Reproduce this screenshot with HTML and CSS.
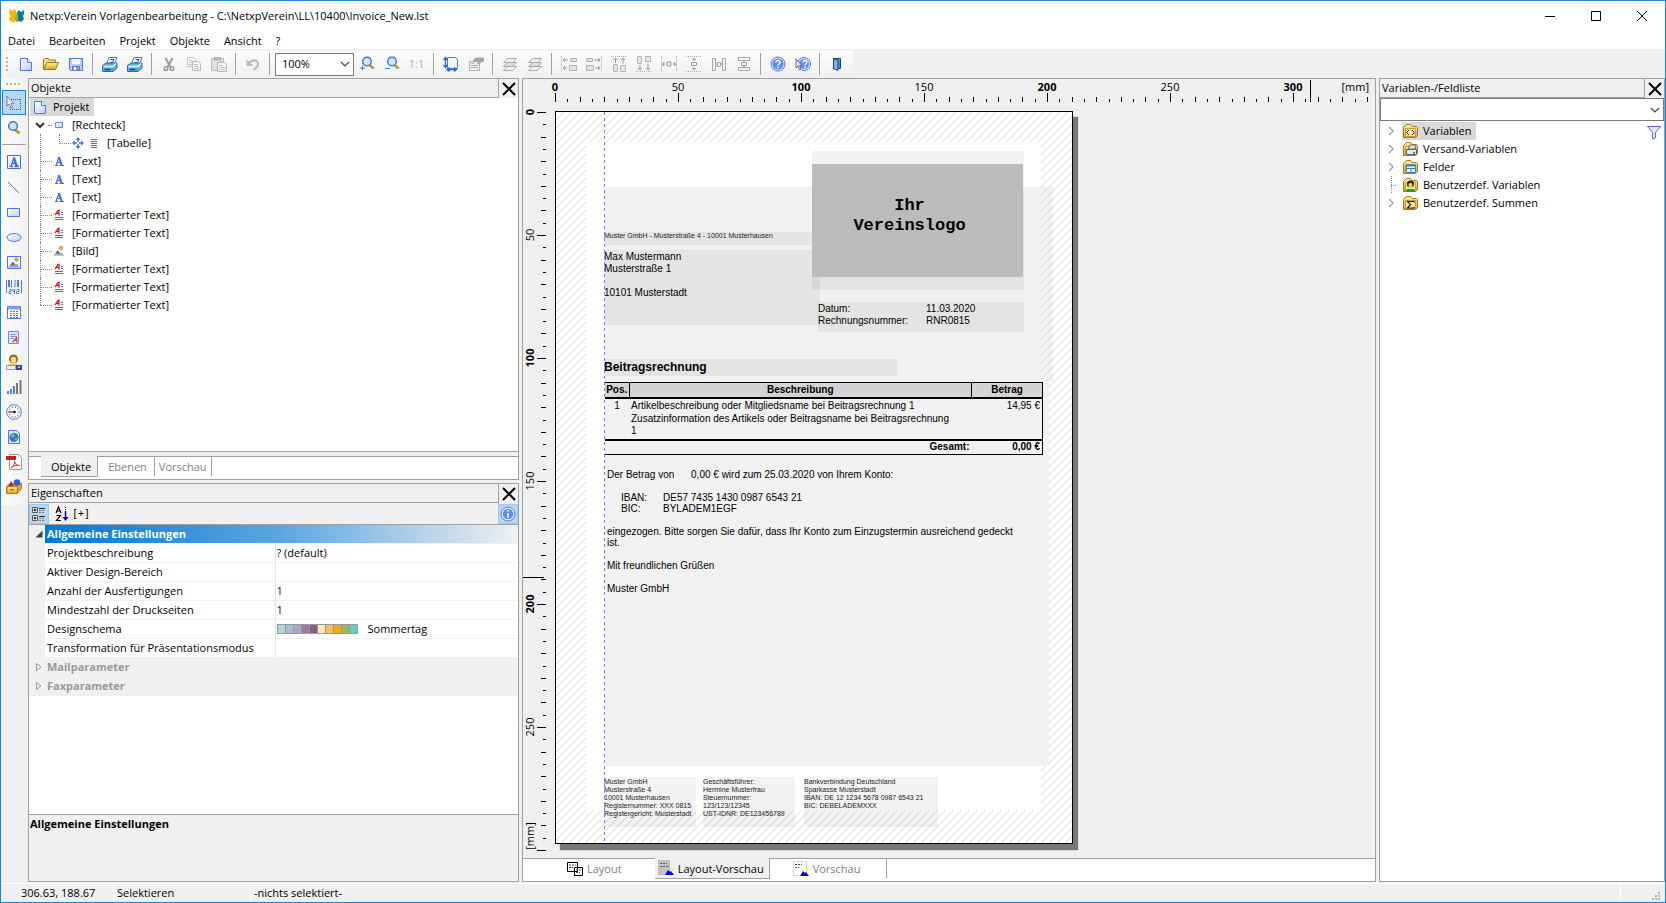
FILE: index.html
```html
<!DOCTYPE html>
<html lang="de">
<head>
<meta charset="utf-8">
<title>Netxp:Verein Vorlagenbearbeitung</title>
<link rel="stylesheet" href="styles.css">
</head>
<body>
<svg class="sprite" aria-hidden="true">
  <defs>
    <linearGradient id="gold" x1="0" y1="0" x2="0" y2="1"><stop offset="0" stop-color="#fff0a0"/><stop offset="1" stop-color="#d9a520"/></linearGradient>
    <linearGradient id="sky" x1="0" y1="0" x2="1" y2="1"><stop offset="0" stop-color="#fff"/><stop offset="1" stop-color="#bcd2fb"/></linearGradient>
    <linearGradient id="hill" x1="0" y1="0" x2="0" y2="1"><stop offset="0" stop-color="#33363c"/><stop offset="1" stop-color="#c9d6ee"/></linearGradient>
  </defs>
  <symbol id="i-logo" viewBox="0 0 16 16"><path d="M0 3l2-2 1 2 2-2 2 2v9l-2 3-2-2-2 1-1-3 1-3z" fill="#f6b80c"/><path d="M8 4l2-2 2 2 3-2v4l-1 2 1 3-3 3-2-1-2 1z" fill="#1674a8"/><path d="M7 5l2 1v7l-2 1-1-4z" fill="#8fb63a"/></symbol>
  <symbol id="i-new" viewBox="0 0 16 16"><path d="M2.500 2.500h7l4 4v8h-11z" fill="url(#sky)" stroke="#4a78ee"/><path d="M9.500 2.500v4h4" fill="#fff" stroke="#4a78ee"/></symbol>
  <symbol id="i-open" viewBox="0 0 16 16"><path d="M.5 13.500v-10l1-1h4l1 1.500h6v3" fill="#f7dd7c" stroke="#9c7a1a"/><path d="M.8 13.500l3-7h11.700l-3 7z" fill="url(#gold)" stroke="#9c7a1a"/></symbol>
  <symbol id="i-save" viewBox="0 0 16 16"><path d="M1.500 2.500h13v12h-12l-1-1z" fill="#b6ccfa" stroke="#4a78ee"/><path d="M4 3h8v5H4z" fill="#f4f8ff"/><path d="M4.500 10.500h7v4h-7z" fill="#8e9fc4" stroke="#5e78b8"/><path d="M6 11h2v3H6z" fill="#fff"/></symbol>
  <symbol id="i-print" viewBox="0 0 16 16"><path d="M4.500 8l2.500-6.500h8L12.500 8z" fill="#fff" stroke="#3c7fd8"/><path d="M8.500 3.500H12l-1.500 3M7.500 6.500H11" fill="none" stroke="#2a4c90"/><path d="M.5 9.500l3.500-2.500h11v5l-4 3.500H.5z" fill="#65b2f0" stroke="#2a66b8"/><path d="M1.500 10.500h9.500l3-3" stroke="#e8f6ff" stroke-width="1.400" fill="none"/><path d="M2.500 13.500h6" stroke="#123c80" stroke-width="1.500"/><path d="M9.500 12.500h2v2h-2z" fill="#28c828"/></symbol>
  <symbol id="i-cut" viewBox="0 0 16 16"><path d="M4.500 2l5 9M11.500 2l-5 9" stroke="#9a9a9a" stroke-width="2"/><circle cx="5" cy="12.500" r="1.800" fill="none" stroke="#9a9a9a" stroke-width="1.500"/><circle cx="11" cy="12.500" r="1.800" fill="none" stroke="#9a9a9a" stroke-width="1.500"/></symbol>
  <symbol id="i-copy" viewBox="0 0 16 16"><path d="M1.500 1.500h6l2 2v7h-8z" fill="#f4f4f4" stroke="#c6c6c6"/><path d="M6.500 5.500h6l2 2v7h-8z" fill="#f4f4f4" stroke="#bcbcbc"/><path d="M3 4.500h3M3 6.500h3M3 8.500h3M8 8.500h4M8 10.500h5M8 12.500h5" stroke="#c4c4c4"/></symbol>
  <symbol id="i-paste" viewBox="0 0 16 16"><path d="M.5 2.500h12v12H.5z" fill="#e0e0e0" stroke="#bcbcbc"/><path d="M3.500 1.500h6v2.500h-6z" fill="#c4c4c4" stroke="#aaa"/><path d="M6.500 6.500h7l2 2v7h-9z" fill="#f6f6f6" stroke="#b4b4b4"/><path d="M8 9.500h4M8 11.500h6M8 13.500h6" stroke="#c4c4c4"/></symbol>
  <symbol id="i-undo" viewBox="0 0 16 16"><path d="M4 8c2-4.500 9-5 9 0 0 3-2 4.500-4.500 5.500" fill="none" stroke="#bcbcbc" stroke-width="2.200"/><path d="M1.500 3v7h7z" fill="#bcbcbc"/></symbol>
  <symbol id="i-lens" viewBox="0 0 16 16"><path d="M9 9.500l4.500 4" stroke="#c89a28" stroke-width="3"/><circle cx="7" cy="6" r="4.300" fill="#d2e6ff" stroke="#3f74e6" stroke-width="1.500"/></symbol>
  <symbol id="i-zoomin" viewBox="0 0 16 16"><path d="M10 8.500l4.500 4" stroke="#c89a28" stroke-width="3"/><circle cx="8" cy="5.500" r="4.300" fill="#d2e6ff" stroke="#3f74e6" stroke-width="1.500"/><path d="M3.500 9.500v5M1 12h5" stroke="#3f74e6"/></symbol>
  <symbol id="i-zoomout" viewBox="0 0 16 16"><path d="M10 8.500l4.500 4" stroke="#c89a28" stroke-width="3"/><circle cx="8" cy="5.500" r="4.300" fill="#d2e6ff" stroke="#3f74e6" stroke-width="1.500"/><path d="M1 12.500h5" stroke="#3f74e6"/></symbol>
  <symbol id="i-pagesize" viewBox="0 0 16 16"><path d="M4.500 1.500h8l2 2v9h-10z" fill="#f2f6ff" stroke="#4a78ee"/><path d="M2.500 2v9M.5 4l2-2.500 2 2.500M.5 9l2 2.500 2-2.500M4 13.500h9M6.500 11.500L4 13.500l2.500 2M11 11.500l2.500 2-2.500 2" fill="none" stroke="#2f63e0" stroke-width="1.300"/></symbol>
  <symbol id="i-props" viewBox="0 0 16 16"><path d="M1.500 5.500h10v9h-10z" fill="#f0f0f0" stroke="#b0b0b0"/><path d="M3 9.500h7M3 11.500h7M3 7.500h3" stroke="#aaa"/><path d="M5 4l3-2.500h8v4l-3 1-2 2-2-1 1-2-4 1z" fill="#a6a6a6"/></symbol>
  <symbol id="i-layers" viewBox="0 0 16 16"><path d="M1.500 14.500l4-4h9l-4 4z" fill="#f0f0f0" stroke="#aaa"/><path d="M1.500 10.500l4-4h9l-4 4z" fill="#ddd" stroke="#aaa"/><path d="M1.500 6.500l4-4h9l-4 4z" fill="#f0f0f0" stroke="#aaa"/></symbol>
  <symbol id="i-al" viewBox="0 0 16 16"><path d="M.5 0v16" stroke="#a8a8a8" stroke-dasharray="1 1"/><path d="M9.500 2.500h6v3h-6zM8.500 9.500h7v5h-7z" fill="#e4e4e4" stroke="#b4b4b4"/><path d="M2 4h5M2 12h4M4 2L2 4l2 2M4 10l-2 2 2 2" fill="none" stroke="#999"/></symbol>
  <symbol id="i-ar" viewBox="0 0 16 16"><path d="M15.500 0v16" stroke="#a8a8a8" stroke-dasharray="1 1"/><path d="M.5 2.500h6v3h-6zM.5 9.500h7v5h-7z" fill="#e4e4e4" stroke="#b4b4b4"/><path d="M8 4h6M9 12h5M12 2l2 2-2 2M12 10l2 2-2 2" fill="none" stroke="#999"/></symbol>
  <symbol id="i-at" viewBox="0 0 16 16"><path d="M0 .5h16" stroke="#a8a8a8" stroke-dasharray="1 1"/><path d="M2.500 8.500h4v7h-4zM9.500 9.500h5v6h-5z" fill="#e4e4e4" stroke="#b4b4b4"/><path d="M4.500 2v5M12 2v6M2.500 4l2-2 2 2M10 4l2-2 2 2" fill="none" stroke="#999"/></symbol>
  <symbol id="i-ab" viewBox="0 0 16 16"><path d="M0 15.500h16" stroke="#a8a8a8" stroke-dasharray="1 1"/><path d="M1.500.5h4v7h-4zM9.500.5h5v5h-5z" fill="#e4e4e4" stroke="#b4b4b4"/><path d="M4 9v5M12 7v7M2 12l2 2 2-2M10 12l2 2 2-2" fill="none" stroke="#999"/></symbol>
  <symbol id="i-ch" viewBox="0 0 16 16"><path d="M.5 0v16M15.500 0v16" stroke="#a8a8a8" stroke-dasharray="1 1"/><path d="M6 6h4v4H6z" fill="#eee" stroke="#999"/><path d="M1 8h3M12 8h3M3 6L1.500 8 3 10M13 6l1.500 2-1.500 2" fill="none" stroke="#999"/></symbol>
  <symbol id="i-cv" viewBox="0 0 16 16"><path d="M0 .5h16M0 15.500h16" stroke="#a8a8a8" stroke-dasharray="1 1"/><path d="M5.500 6.500h5v3h-5z" fill="#eee" stroke="#999"/><path d="M8 2v3M8 11v3M6 4l2-2 2 2M6 12l2 2 2-2" fill="none" stroke="#999"/></symbol>
  <symbol id="i-dh" viewBox="0 0 16 16"><path d="M1.500 2.500h3v12h-3zM11.500 2.500h3v12h-3zM6.500 6.500h3v4h-3z" fill="#f4f4f4" stroke="#a4a4a4"/><path d="M4 8h2M10 8h2" stroke="#999"/></symbol>
  <symbol id="i-dv" viewBox="0 0 16 16"><path d="M2.500 1.500h11v3h-11zM2.500 11.500h11v3h-11zM5.500 6.500h5v3h-5z" fill="#f4f4f4" stroke="#a4a4a4"/><path d="M8 4v2M8 10v2" stroke="#999"/></symbol>
  <symbol id="i-help" viewBox="0 0 16 16"><circle cx="8" cy="8" r="7" fill="#dce8ff" stroke="#4a78ee"/><circle cx="8" cy="8" r="5.600" fill="#5f8cf2"/><path d="M6 6.500c0-3 4.200-2.500 4 0C10 8 8 8 8 9.500M8 10.500v1.500" fill="none" stroke="#fff" stroke-width="1.500"/></symbol>
  <symbol id="i-helpc" viewBox="0 0 16 16"><circle cx="9" cy="8" r="6.500" fill="#dce8ff" stroke="#4a78ee"/><circle cx="9" cy="8" r="5" fill="#5f8cf2"/><path d="M8 6.500c0-3 4-2.500 3.800 0 0 1.500-1.800 1.500-1.800 3M10 10.500v1.500" fill="none" stroke="#fff" stroke-width="1.400"/><path d="M1 3v9l2-2 1.500 4 1.500-1-1.500-3.500H7z" fill="#dde3ee" stroke="#555" stroke-width=".8"/></symbol>
  <symbol id="i-exit" viewBox="0 0 16 16"><path d="M4.500 2.500h7v10h-7z" fill="#5f8cc8" stroke="#174078"/><path d="M4.500 2.500l4.500 2v10l-4.500-2z" fill="#7fb2f2" stroke="#174078"/></symbol>
  <symbol id="i-arrow" viewBox="0 0 16 16"><path d="M5 4.500h10M14.500 4v11M4 14.500h11M4.500 12v3" fill="none" stroke="#2458c0" stroke-dasharray="1 1"/><path d="M1 1v10l2-2 2 4 1.500-1L5 8.500h3z" fill="#f2f2f2" stroke="#666" stroke-width=".8"/></symbol>
  <symbol id="i-textbox" viewBox="0 0 16 16"><path d="M1.500 1.500h13v13h-13z" fill="#f2f6ff" stroke="#3f6fe8"/><path d="M3.500 12.500h3.500M8.500 12.500h4.500M5 12.500L8 3.500M6 9.500h4" fill="none" stroke="#3f6fe8" stroke-width="1.300"/><path d="M7.800 3.500l3 9" stroke="#3f6fe8" stroke-width="2.400"/></symbol>
  <symbol id="i-line" viewBox="0 0 16 16"><path d="M2 3l11 11" stroke="#4a78ee"/></symbol>
  <symbol id="i-rect" viewBox="0 0 16 16"><path d="M1.500 4.500h12v8h-12z" fill="url(#sky)" stroke="#4a78ee"/></symbol>
  <symbol id="i-ellipse" viewBox="0 0 16 16"><ellipse cx="8" cy="8.500" rx="7" ry="4" fill="url(#sky)" stroke="#4a78ee"/></symbol>
  <symbol id="i-image" viewBox="0 0 16 16"><path d="M1.500 2.500h13v12h-13z" fill="#eef4ff" stroke="#4a78ee"/><path d="M2 13l5-5 3 3 1-1 3 4H2z" fill="url(#hill)"/><circle cx="10.500" cy="5.500" r="1.800" fill="#f0b820" stroke="#b07a10" stroke-width=".6"/></symbol>
  <symbol id="i-picture" viewBox="0 0 12 12"><path d="M0 11l4.500-5.500L8 8.500l1-.5 3 3z" fill="url(#hill)"/><circle cx="8" cy="3" r="1.800" fill="#f0b820" stroke="#b07a10" stroke-width=".6"/></symbol>
  <symbol id="i-barcode" viewBox="0 0 16 16"><path d="M.5 1v13M5.500 1v7M9 1v7M15.500 1v13" stroke="#4a78ee"/><path d="M3 1v7M12 1v7" stroke="#4a78ee" stroke-width="2"/><path d="M3 10.500h2v2H3v2h2.500M7 10v2.500h2M8.500 10v5M10.500 10.500h2.500v2h-2.500v2H13" fill="none" stroke="#4a78ee"/></symbol>
  <symbol id="i-table" viewBox="0 0 16 16"><path d="M1.500 2.500h13v12h-13z" fill="#fff" stroke="#4a78ee"/><path d="M2 4h12" stroke="#7ea2f4" stroke-width="3"/><path d="M4 7.500h9M4 9.500h9M4 11.500h9M4 13.500h9" stroke="#2a8ce0" stroke-width="1.200" stroke-dasharray="2 1"/></symbol>
  <symbol id="i-rtf" viewBox="0 0 16 16"><path d="M2.500 2.500h10v12h-10z" fill="#dbe6fc" stroke="#6e8fe6"/><path d="M4.500 5.500h6M4.500 7.500h6M4.500 9.500h3" stroke="#7a98e8"/><path d="M6.500 13.500l4-5 .5 5M8 11.500h3" fill="none" stroke="#e03030" stroke-width="1.200"/></symbol>
  <symbol id="i-user" viewBox="0 0 16 16"><circle cx="7.500" cy="5" r="4.500" fill="#9a6c10"/><ellipse cx="7.500" cy="6" rx="2.700" ry="3.200" fill="#fbd890"/><path d="M2 12c1-3 9-3 11 0z" fill="#f0b840"/><path d="M.5 11.500h9v4h-9z" fill="#eef2fb" stroke="#8a98b8"/><path d="M10 11h6v5h-6z" fill="#2c4a88"/><path d="M11.500 12.500h3L13 14.500z" fill="#fff"/></symbol>
  <symbol id="i-bars" viewBox="0 0 16 16"><path d="M2 12v3M5 10v5M8 7v8" stroke="#4a84ee" stroke-width="2"/><path d="M11 4v11M14.500 1v14" stroke="#777" stroke-width="2"/></symbol>
  <symbol id="i-gauge" viewBox="0 0 16 16"><circle cx="8" cy="8" r="7.300" fill="#f6f9ff" stroke="#4a78ee"/><circle cx="8" cy="8" r="5" fill="none" stroke="#222" stroke-dasharray="1 2"/><path d="M2.500 8H8" stroke="#e02020" stroke-width="1.400"/><circle cx="8.500" cy="8" r="1.300" fill="#111"/></symbol>
  <symbol id="i-globe" viewBox="0 0 16 16"><path d="M2.500 1.500h8l3 3v10h-11z" fill="#dce8ff" stroke="#4a78ee"/><circle cx="8" cy="8.500" r="4.600" fill="#2a78c0"/><path d="M5 6l3-1.500 1 2-2 2.500-2-1zM9 9l3-.5-1.500 3.500-1.500-1z" fill="#58c090"/></symbol>
  <symbol id="i-pdf" viewBox="0 0 16 16"><path d="M3.500.5h9l3 3v12h-12z" fill="#fff" stroke="#999"/><path d="M0 2h10v4H0z" fill="#d81818"/><path d="M5 14c3-2 4-5 3.500-7 .5 3 2.500 5 5 4.500-3-1-6 0-8.500 2.500z" fill="none" stroke="#e03030"/></symbol>
  <symbol id="i-box" viewBox="0 0 16 16"><path d="M.5 7.500l4-3h11v5l-4 5H.5z" fill="#e8a828" stroke="#b07810"/><path d="M1 7.500h10.500v7H1z" fill="url(#gold)" stroke="#b07810"/><path d="M2 7l3-5 3 5z" fill="#e02020"/><circle cx="11" cy="3.500" r="3.300" fill="#2a5ce8"/><path d="M4 10h4v1.500H4z" fill="#b07810"/></symbol>
  <symbol id="i-a" viewBox="0 0 12 12"><path d="M2 10.500h3M6.500 10.500H11M3 10.500L6 2M4 7.500h4" fill="none" stroke="#3f6fe8" stroke-width="1.200"/><path d="M5.800 2l3 8.500" stroke="#3f6fe8" stroke-width="2.200"/></symbol>
  <symbol id="i-fmt" viewBox="0 0 12 12"><path d="M2 6l3-4.500h1V6.500M3.500 4.500H6" fill="none" stroke="#d81818" stroke-width="1.300"/><path d="M8 3.500h2M8 5.500h2M2 8.500h8M2 10.500h8" stroke="#3f6fe8"/></symbol>
  <symbol id="i-smallrect" viewBox="0 0 12 12"><path d="M2.500 3.500h7v5h-7z" fill="url(#sky)" stroke="#5f8cf0"/></symbol>
  <symbol id="i-move" viewBox="0 0 12 12"><path d="M6 0L3.500 3h5zM6 12L3.500 9h5zM0 6l3-2.500v5zM12 6L9 3.500v5z" fill="#3f74e8"/><path d="M6 3v2M6 7v2M3 6h2M7 6h2" stroke="#3f74e8" stroke-width="1.400"/></symbol>
  <symbol id="i-lines" viewBox="0 0 12 12"><path d="M3 2.500h6M3 4.500h6M3 6.500h6M3 8.500h6M3 10.500h6" stroke="#3f6fe8"/></symbol>
  <symbol id="i-folder" viewBox="0 0 16 16"><path d="M1.500 14.500v-10l3-3h4l2 2h4l1 1v8l-2 2z" fill="url(#gold)" stroke="#a87a14"/><path d="M3.500 5.500h10v8h-10z" fill="#fbe69a" stroke="#c89a30"/></symbol>
  <symbol id="i-chev" viewBox="0 0 10 10"><path d="M3 1l4 4-4 4" fill="none" stroke="#a0a0a0" stroke-width="1.400"/></symbol>
  <symbol id="i-down" viewBox="0 0 10 10"><path d="M1 3l4 4 4-4" fill="none" stroke="#444" stroke-width="1.200"/></symbol>
  <symbol id="i-twist" viewBox="0 0 10 10"><path d="M1 3l4 4 4-4" fill="none" stroke="#333" stroke-width="2"/></symbol>
  <symbol id="i-x" viewBox="0 0 14 14"><path d="M1 1l12 12M13 1L1 13" stroke="#000" stroke-width="2"/></symbol>
  <symbol id="i-filter" viewBox="0 0 16 16"><path d="M1.500 2.500h13l-5 6v5l-3 1.500V8.500z" fill="#e4e8ff" stroke="#5c68d8"/></symbol>
</svg>

<div class="window">
  <header class="titlebar">
    <svg class="ico"><use href="#i-logo"/></svg>
    <h1 class="title">Netxp:Verein Vorlagenbearbeitung - C:\NetxpVerein\LL\10400\Invoice_New.lst</h1>
    <button class="winbtn" aria-label="Minimieren"><svg viewBox="0 0 12 12"><path d="M1 6.500h10" stroke="#000"/></svg></button>
    <button class="winbtn" aria-label="Maximieren"><svg viewBox="0 0 12 12"><path d="M1.500 1.500h9v9h-9z" fill="none" stroke="#000"/></svg></button>
    <button class="winbtn" aria-label="Schließen"><svg viewBox="0 0 12 12"><path d="M1 1l10 10M11 1L1 11" stroke="#000"/></svg></button>
  </header>
  <nav class="menubar">
    <button>Datei</button><button>Bearbeiten</button><button>Projekt</button><button>Objekte</button><button>Ansicht</button><button>?</button>
  </nav>
  <div class="toolbar-row">
    <div class="toolbar">
      <span class="grip"></span>
      <button aria-label="Neu"><svg class="ico"><use href="#i-new"/></svg></button>
      <button aria-label="Öffnen"><svg class="ico"><use href="#i-open"/></svg></button>
      <button aria-label="Speichern"><svg class="ico"><use href="#i-save"/></svg></button>
      <span class="sep"></span>
      <button aria-label="Drucken"><svg class="ico"><use href="#i-print"/></svg></button>
      <button aria-label="Seriendruck"><svg class="ico"><use href="#i-print"/></svg></button>
      <span class="sep"></span>
      <button aria-label="Ausschneiden"><svg class="ico"><use href="#i-cut"/></svg></button>
      <button aria-label="Kopieren"><svg class="ico"><use href="#i-copy"/></svg></button>
      <button aria-label="Einfügen"><svg class="ico"><use href="#i-paste"/></svg></button>
      <span class="sep"></span>
      <button aria-label="Rückgängig"><svg class="ico"><use href="#i-undo"/></svg></button>
      <span class="sep"></span>
      <span class="combo zoom"><select aria-label="Zoom"><option>100%</option></select><svg class="chev"><use href="#i-down"/></svg></span>
      <button aria-label="Vergrößern"><svg class="ico"><use href="#i-zoomin"/></svg></button>
      <button aria-label="Verkleinern"><svg class="ico"><use href="#i-zoomout"/></svg></button>
      <button class="ratio">1:1</button>
      <span class="sep"></span>
      <button aria-label="Seitengröße"><svg class="ico"><use href="#i-pagesize"/></svg></button>
      <button aria-label="Eigenschaften"><svg class="ico"><use href="#i-props"/></svg></button>
      <span class="sep"></span>
      <button aria-label="Nach vorne"><svg class="ico"><use href="#i-layers"/></svg></button>
      <button aria-label="Nach hinten"><svg class="ico"><use href="#i-layers"/></svg></button>
      <span class="sep"></span>
      <button aria-label="Links ausrichten"><svg class="ico"><use href="#i-al"/></svg></button>
      <button aria-label="Rechts ausrichten"><svg class="ico"><use href="#i-ar"/></svg></button>
      <button aria-label="Oben ausrichten"><svg class="ico"><use href="#i-at"/></svg></button>
      <button aria-label="Unten ausrichten"><svg class="ico"><use href="#i-ab"/></svg></button>
      <button aria-label="Horizontal zentrieren"><svg class="ico"><use href="#i-ch"/></svg></button>
      <button aria-label="Vertikal zentrieren"><svg class="ico"><use href="#i-cv"/></svg></button>
      <button aria-label="Horizontal verteilen"><svg class="ico"><use href="#i-dh"/></svg></button>
      <button aria-label="Vertikal verteilen"><svg class="ico"><use href="#i-dv"/></svg></button>
      <span class="sep"></span>
      <button aria-label="Hilfe"><svg class="ico"><use href="#i-help"/></svg></button>
      <button aria-label="Direkthilfe"><svg class="ico"><use href="#i-helpc"/></svg></button>
      <span class="sep"></span>
      <button aria-label="Beenden"><svg class="ico"><use href="#i-exit"/></svg></button>
    </div>
  </div>

  <main class="main">
    <div class="toolbox">
      <div class="tools">
        <span class="grip flat"></span>
        <button class="on" aria-label="Selektieren"><svg class="ico"><use href="#i-arrow"/></svg></button>
        <button aria-label="Lupe"><svg class="ico"><use href="#i-lens"/></svg></button>
        <span class="sep"></span>
        <button aria-label="Text"><svg class="ico"><use href="#i-textbox"/></svg></button>
        <button aria-label="Linie"><svg class="ico"><use href="#i-line"/></svg></button>
        <button aria-label="Rechteck"><svg class="ico"><use href="#i-rect"/></svg></button>
        <button aria-label="Ellipse"><svg class="ico"><use href="#i-ellipse"/></svg></button>
        <button aria-label="Bild"><svg class="ico"><use href="#i-image"/></svg></button>
        <button aria-label="Barcode"><svg class="ico"><use href="#i-barcode"/></svg></button>
        <button aria-label="Tabelle"><svg class="ico"><use href="#i-table"/></svg></button>
        <button aria-label="Formatierter Text"><svg class="ico"><use href="#i-rtf"/></svg></button>
        <button aria-label="Formularelement"><svg class="ico"><use href="#i-user"/></svg></button>
        <button aria-label="Diagramm"><svg class="ico"><use href="#i-bars"/></svg></button>
        <button aria-label="Anzeige"><svg class="ico"><use href="#i-gauge"/></svg></button>
        <button aria-label="HTML"><svg class="ico"><use href="#i-globe"/></svg></button>
        <button aria-label="PDF"><svg class="ico"><use href="#i-pdf"/></svg></button>
        <button aria-label="Vorlage"><svg class="ico"><use href="#i-box"/></svg></button>
      </div>
    </div>

    <div class="dock-left">
      <section class="panel objects">
        <header class="phead"><h2>Objekte</h2><button class="close" aria-label="Schließen"><svg><use href="#i-x"/></svg></button></header>
        <ul class="tree">
          <li class="root"><svg class="ico"><use href="#i-new"/></svg><span>Projekt</span></li>
          <li class="node open"><svg class="twist"><use href="#i-twist"/></svg><svg class="ic"><use href="#i-smallrect"/></svg><span>[Rechteck]</span></li>
          <li class="node child"><svg class="ic"><use href="#i-move"/></svg><svg class="ic"><use href="#i-lines"/></svg><span>[Tabelle]</span></li>
          <li class="node"><svg class="ic"><use href="#i-a"/></svg><span>[Text]</span></li>
          <li class="node"><svg class="ic"><use href="#i-a"/></svg><span>[Text]</span></li>
          <li class="node"><svg class="ic"><use href="#i-a"/></svg><span>[Text]</span></li>
          <li class="node"><svg class="ic"><use href="#i-fmt"/></svg><span>[Formatierter Text]</span></li>
          <li class="node"><svg class="ic"><use href="#i-fmt"/></svg><span>[Formatierter Text]</span></li>
          <li class="node"><svg class="ic"><use href="#i-picture"/></svg><span>[Bild]</span></li>
          <li class="node"><svg class="ic"><use href="#i-fmt"/></svg><span>[Formatierter Text]</span></li>
          <li class="node"><svg class="ic"><use href="#i-fmt"/></svg><span>[Formatierter Text]</span></li>
          <li class="node last"><svg class="ic"><use href="#i-fmt"/></svg><span>[Formatierter Text]</span></li>
        </ul>
        <div class="tabs side"><button class="tab active">Objekte</button><button class="tab">Ebenen</button><button class="tab">Vorschau</button></div>
      </section>

      <section class="panel props">
        <header class="phead"><h2>Eigenschaften</h2><button class="close" aria-label="Schließen"><svg><use href="#i-x"/></svg></button></header>
        <div class="ptools">
          <button class="on" aria-label="Kategorien"><svg class="ico" viewBox="0 0 16 16"><path d="M1.500 1.500h5v5h-5zM1.500 9.500h5v5h-5z" fill="#fff" stroke="#555"/><path d="M2.500 4h3M4 2.500v3M2.500 12h3M4 10.500v3" stroke="#000"/><path d="M8 2.500h6M8 10.500h6" stroke="#222"/><path d="M8 4.500h6M8 6.500h6M8 12.500h6M8 14.500h6" stroke="#777" stroke-dasharray="2 1"/></svg></button>
          <button aria-label="Alphabetisch"><svg class="ico" viewBox="0 0 16 16"><path d="M2 7l2.500-6L7 7M3 5h3M2.500 9.500h4l-4 5h4.500" fill="none" stroke="#000" stroke-width="1.200"/><path d="M11.500 1v4" stroke="#00c" stroke-dasharray="1 1"/><path d="M11.500 5v7" stroke="#00a" stroke-width="1.500"/><path d="M8.500 11h6l-3 4z" fill="#00a"/></svg></button>
          <button class="expand">[+]</button>
          <button class="on info" aria-label="Info"><svg class="ico" viewBox="0 0 16 16"><circle cx="8" cy="8" r="7" fill="#e2ebff" stroke="#4a78ee"/><circle cx="8" cy="8" r="5.200" fill="#5f8cf2"/><path d="M8 4v1.500M8 7v5" stroke="#fff" stroke-width="1.600"/></svg></button>
        </div>
        <div class="plist">
          <table class="grid">
            <colgroup><col class="c-gut"><col class="c-name"><col></colgroup>
            <tr class="cat"><td><svg class="tri" viewBox="0 0 8 8"><path d="M7.500.5v7h-7z" fill="#404040"/></svg></td><th colspan="2">Allgemeine Einstellungen</th></tr>
            <tr><td></td><td>Projektbeschreibung</td><td>? (default)</td></tr>
            <tr><td></td><td>Aktiver Design-Bereich</td><td></td></tr>
            <tr><td></td><td>Anzahl der Ausfertigungen</td><td class="num">1</td></tr>
            <tr><td></td><td>Mindestzahl der Druckseiten</td><td class="num">1</td></tr>
            <tr><td></td><td>Designschema</td><td><span class="scheme"><span class="swatches"><i class="s1"></i><i class="s2"></i><i class="s3"></i><i class="s4"></i><i class="s5"></i><i class="s6"></i><i class="s7"></i><i class="s8"></i><i class="s9"></i><i class="s10"></i></span>Sommertag</span></td></tr>
            <tr><td></td><td>Transformation für Präsentationsmodus</td><td></td></tr>
            <tr class="off"><td><svg class="tri" viewBox="0 0 8 8"><path d="M1.500.5L6 4 1.500 7.500z" fill="none" stroke="#999"/></svg></td><th colspan="2">Mailparameter</th></tr>
            <tr class="off"><td><svg class="tri" viewBox="0 0 8 8"><path d="M1.500.5L6 4 1.500 7.500z" fill="none" stroke="#999"/></svg></td><th colspan="2">Faxparameter</th></tr>
          </table>
        </div>
        <div class="pdesc">Allgemeine Einstellungen</div>
      </section>
    </div>

    <section class="panel editor">
      <div class="canvas">
        <svg class="hruler">
          <defs>
            <pattern id="ht" x="32" y="0" width="123" height="24" patternUnits="userSpaceOnUse"><path d="M.5 14v9M12.500 20v3M25.500 18v5M37.500 20v3M49.500 18v5M62.500 20v3M74.500 18v5M86.500 20v3M98.500 18v5M111.500 20v3" stroke="#000"/></pattern>
          </defs>
          <rect class="hticks" x="32" y="0" height="24" fill="url(#ht)"/>
          <path d="M787.500 1v22" stroke="#000"/>
          <g text-anchor="middle"><text class="b" x="32" y="12">0</text><text x="155" y="12">50</text><text class="b" x="278" y="12">100</text><text x="401" y="12">150</text><text class="b" x="524" y="12">200</text><text x="647" y="12">250</text><text class="b" x="770" y="12">300</text></g>
          <text x="100%" dx="-6" y="12" text-anchor="end">[mm]</text>
        </svg>
        <svg class="vruler">
          <defs>
            <pattern id="vt" x="0" y="9" width="33" height="123" patternUnits="userSpaceOnUse"><path d="M14 .5h9M20 12.500h3M18 25.500h5M20 37.500h3M18 49.500h5M20 62.500h3M18 74.500h5M20 86.500h3M18 98.500h5M20 111.500h3" stroke="#000"/></pattern>
          </defs>
          <rect x="0" y="9" width="33" height="742" fill="url(#vt)"/>
          <path d="M0 474.500h21" stroke="#000"/>
          <g text-anchor="middle"><text class="b" transform="translate(11 9) rotate(-90)">0</text><text transform="translate(11 132) rotate(-90)">50</text><text class="b" transform="translate(11 255) rotate(-90)">100</text><text transform="translate(11 378) rotate(-90)">150</text><text class="b" transform="translate(11 501) rotate(-90)">200</text><text transform="translate(11 624) rotate(-90)">250</text><text transform="translate(11 733) rotate(-90)">[mm]</text></g>
        </svg>
        <div class="work">
          <article class="page">
            <div class="obj o-body1"></div>
            <svg class="obj hatch"><defs><pattern id="hp" width="8" height="8" patternUnits="userSpaceOnUse"><path d="M-1 9L9-1M-1 1L1-1M7 9L9 7" stroke="#d6d6d6" stroke-width=".9"/></pattern></defs><path d="M0 0h516v731H0zM30 30v669h455V30z" fill="url(#hp)" fill-rule="evenodd"/></svg>
            <div class="obj o-f1">Muster GmbH<br>Musterstraße 4<br>10001 Musterhausen<br>Registernummer: XXX 0815<br>Registergericht: Musterstadt</div>
            <div class="obj o-f2">Geschäftsführer:<br>Hermine Musterfrau<br>Steuernummer:<br>123/123/12345<br>UST-IDNR: DE123456789</div>
            <div class="obj o-f3">Bankverbindung Deutschland<br>Sparkasse Musterstadt<br>IBAN: DE 12 1234 5678 0987 6543 21<br>BIC: DEBELADEMXXX</div>
            <div class="obj o-body2"></div>
            <div class="obj o-addr">Max Mustermann<br>Musterstraße 1<br><br>10101 Musterstadt</div>
            <div class="obj o-sender">Muster GmbH - Musterstraße 4 - 10001 Musterhausen</div>
            <div class="obj o-logo"><div>Ihr<br>Vereinslogo</div></div>
            <dl class="obj o-meta"><dt>Datum:</dt><dd>11.03.2020</dd><dt>Rechnungsnummer:</dt><dd>RNR0815</dd></dl>
            <h3 class="obj o-title">Beitragsrechnung</h3>
            <table class="obj items">
              <colgroup><col class="c-pos"><col><col class="c-amt"></colgroup>
              <thead><tr><th>Pos.</th><th>Beschreibung</th><th>Betrag</th></tr></thead>
              <tbody><tr><td class="ctr">1</td><td>Artikelbeschreibung oder Mitgliedsname bei Beitragsrechnung 1<p>Zusatzinformation des Artikels oder Beitragsname bei Beitragsrechnung<br>1</p></td><td class="r">14,95 €</td></tr></tbody>
              <tfoot><tr><th colspan="2" class="r">Gesamt:</th><th class="r">0,00 €</th></tr></tfoot>
            </table>
            <div class="obj o-text">
              <p>Der Betrag von <span class="amt">0,00 € wird zum 25.03.2020 von Ihrem Konto:</span></p>
              <dl><dt>IBAN:</dt><dd>DE57 7435 1430 0987 6543 21</dd><dt>BIC:</dt><dd>BYLADEM1EGF</dd></dl>
              <p>eingezogen. Bitte sorgen Sie dafür, dass Ihr Konto zum Einzugstermin ausreichend gedeckt<br>ist.</p>
              <p>Mit freundlichen Grüßen</p>
              <p>Muster GmbH</p>
            </div>
            <div class="obj guide"></div>
          </article>
        </div>
      </div>
      <div class="tabs bottom">
        <button class="tab"><svg class="ico" viewBox="0 0 16 16"><path d="M.5 1.500h10v9H.5zM7.500 6.500h8v8h-8z" fill="none" stroke="#000"/><path d="M2 4h7M2 6.500h4M9 9h5M9 11.500h4" stroke="#444" stroke-dasharray="2 1"/></svg>Layout</button>
        <button class="tab active"><svg class="ico" viewBox="0 0 16 16"><path d="M.5.500h11v14H.5z" fill="#c4c4c4" stroke="#999" stroke-dasharray="1 1"/><path d="M2 3.500h7M2 6.500h8" stroke="#555" stroke-dasharray="2 1"/><path d="M7 15l3-5 2 2 1-1 3 4z" fill="#00e"/><circle cx="14" cy="9" r="1.300" fill="#ff0"/></svg>Layout-Vorschau</button>
        <button class="tab"><svg class="ico" viewBox="0 0 16 16"><path d="M.5.500h13v14H.5z" fill="#fff" stroke="#aaa" stroke-dasharray="1 1"/><path d="M2 3.500h7M2 6.500h4" stroke="#555" stroke-dasharray="2 1"/><path d="M7 15l3-5 2 2 1-1 3 4z" fill="#00e"/><circle cx="14" cy="9" r="1.300" fill="#ff0"/></svg>Vorschau</button>
      </div>
    </section>

    <section class="panel fields">
      <header class="phead"><h2>Variablen-/Feldliste</h2><button class="close" aria-label="Schließen"><svg><use href="#i-x"/></svg></button></header>
      <span class="combo search"><select aria-label="Suche"><option></option></select><svg class="chev"><use href="#i-down"/></svg></span>
      <div class="ftree">
        <ul>
          <li><svg class="twist"><use href="#i-chev"/></svg><span class="lbl on"><svg class="ico" viewBox="0 0 16 16"><use href="#i-folder"/><path d="M7 7L4.500 9.500 7 12M10 7l2.500 2.500L10 12" fill="none" stroke="#222"/></svg>Variablen</span></li>
          <li><svg class="twist"><use href="#i-chev"/></svg><span class="lbl"><svg class="ico" viewBox="0 0 16 16"><use href="#i-folder"/><path d="M6 8l2-4h6l-1 4zM4.500 8.500h10v5h-10z" fill="#dfe6ee" stroke="#667"/><path d="M11 11h2v2h-2z" fill="#2b2"/></svg>Versand-Variablen</span></li>
          <li><svg class="twist"><use href="#i-chev"/></svg><span class="lbl"><svg class="ico" viewBox="0 0 16 16"><use href="#i-folder"/><path d="M4.500 6.500h9v7h-9zM4.500 9.500h9M9 9v4" fill="#fff" stroke="#2a84d0"/><path d="M4 6.500h10" stroke="#2a84d0" stroke-width="2"/></svg>Felder</span></li>
          <li><svg class="twist joint" viewBox="0 0 10 18"><path d="M5.500 0v18M5 9.500h5" fill="none" stroke="#888" stroke-dasharray="1 1"/></svg><span class="lbl"><svg class="ico" viewBox="0 0 16 16"><use href="#i-folder"/><circle cx="8.500" cy="7" r="3.500" fill="#222"/><ellipse cx="8.500" cy="8.500" rx="2" ry="2.800" fill="#f6c860"/><path d="M4 15c0-4 2-3 4.500-3s4.500-1 4.500 3z" fill="#2a9a2a"/></svg>Benutzerdef. Variablen</span></li>
          <li><svg class="twist"><use href="#i-chev"/></svg><span class="lbl"><svg class="ico" viewBox="0 0 16 16"><use href="#i-folder"/><path d="M12 7.500V6.500H5.500L8.500 9.500 5.500 13H12v-1" fill="none" stroke="#222" stroke-width="1.200"/></svg>Benutzerdef. Summen</span></li>
        </ul>
        <button class="filter" aria-label="Filter"><svg class="ico"><use href="#i-filter"/></svg></button>
      </div>
    </section>
  </main>

  <footer class="status"><span class="st pos">306.63, 188.67</span><span class="st tool">Selektieren</span><span class="st sel">-nichts selektiert-</span>
    <svg class="sizer" viewBox="0 0 9 9"><path d="M6 0h2v2H6zM3 3h2v2H3zM6 3h2v2H6zM0 6h2v2H0zM3 6h2v2H3zM6 6h2v2H6z" fill="#b4b4b4"/></svg></footer>
</div>
</body>
</html>
```
FILE: styles.css
```css
* { box-sizing: border-box; margin: 0; padding: 0; }
body { font: 11px/18px "Open Sans", "Noto Sans", sans-serif; color: #000; background: #f0f0f0; }
button { font: inherit; color: inherit; background: none; border: 0; }
select { font: inherit; color: inherit; appearance: none; background: #fff; border: 0; width: 100%; height: 100%; }
ul { list-style: none; }
h1, h2 { font: inherit; }
.sprite { position: absolute; width: 0; height: 0; }
.ico { width: 16px; height: 16px; flex: none; display: block; }

.window { height: 100vh; min-height: 600px; display: flex; flex-direction: column; border: 1px solid #1a82d8; overflow: hidden; }
.titlebar { height: 30px; flex: none; display: flex; align-items: center; background: #fff; padding-left: 8px; }
.title { flex: 1; margin-left: 5px; }
.winbtn { width: 46px; height: 28px; display: grid; place-items: center; }
.winbtn svg { width: 12px; height: 12px; }
.menubar { height: 18px; flex: none; display: flex; background: #fff; }
.menubar button { padding: 1px 7px 0; line-height: 18px; }

.toolbar-row { height: 29px; flex: none; padding: 2px 0 0 2px; }
.toolbar { display: inline-flex; align-items: center; height: 26px; padding-right: 4px; background: linear-gradient(#fcfcfc, #f0f0f0); }
.toolbar button { width: 25px; height: 24px; display: grid; place-items: center; }
.toolbar .ratio { color: #b0b0b0; }
.sep { width: 1px; height: 22px; margin: 0 4px; background: #a0a0a0; flex: none; }
.grip { width: 2px; height: 15px; margin: 0 5px 0 3px; background: repeating-linear-gradient(#b4b4b4 0 2px, transparent 2px 4px); }
.combo { position: relative; display: block; border: 1px solid #7a7a7a; background: #fff; }
.combo select { padding-left: 6px; }
.combo .chev { position: absolute; right: 3px; top: 50%; margin-top: -5px; width: 10px; height: 10px; pointer-events: none; }
.zoom { width: 79px; height: 23px; margin-left: 1px; }

.main { flex: 1; min-height: 0; display: flex; gap: 3px; }
.toolbox { width: 27px; flex: none; margin-right: -3px; }
.tools { display: flex; flex-direction: column; align-items: flex-start; padding: 3px 0 6px 1px; background: linear-gradient(90deg, #fcfcfc, #f0f0f0); }
.tools button { width: 24px; height: 25px; display: grid; place-items: center; }
.tools .on { background: #b8d8f2; border: 1px solid #1a82d8; }
.tools .sep { width: 24px; height: 1px; margin: 4px 0; }
.grip.flat { width: 15px; height: 2px; margin: 2px 0 5px 4px; background: repeating-linear-gradient(90deg, #b4b4b4 0 2px, transparent 2px 4px); }

.dock-left { width: 491px; flex: none; display: flex; flex-direction: column; gap: 3px; }
.panel { border: 1px solid #a0a0a0; display: flex; flex-direction: column; min-height: 0; min-width: 0; background: #f0f0f0; }
.phead { height: 19px; flex: none; display: flex; justify-content: space-between; border-bottom: 1px solid #a0a0a0; }
.phead h2 { padding-left: 2px; }
.close { width: 20px; height: 20px; border-left: 1px solid #a0a0a0; background: #f0f0f0; display: grid; place-items: center; }
.close svg { width: 14px; height: 14px; }
.objects { flex: 402 1 0; }
.props { flex: 399 1 0; }

.tree { flex: 1; overflow: hidden; background: #fff; border-bottom: 1px solid #a0a0a0; padding-left: 1px; }
.tree li { height: 18px; display: flex; align-items: center; }
.tree .root { width: 64px; background: #d9d9d9; padding-left: 2px; gap: 5px; }
.tree .node { margin-left: 10px; padding-left: 13px; gap: 7px; position: relative; }
.tree .node::before { content: ""; position: absolute; left: 0; top: 0; height: 18px; border-left: 1px dotted #888; }
.tree .node::after { content: ""; position: absolute; left: 0; top: 9px; width: 12px; border-top: 1px dotted #888; }
.tree .last::before { height: 9px; }
.tree .open::before { display: none; }
.tree .open::after { left: 8px; width: 4px; }
.tree .child { padding-left: 32px; gap: 4px; }
.tree .child span { margin-left: 3px; }
.tree .child::after { left: 19px; width: 11px; top: 0; height: 9px; border-top: 0; border-left: 1px dotted #888; border-bottom: 1px dotted #888; }
.ic { width: 12px; height: 12px; flex: none; }
.tree .twist { position: absolute; left: -5px; width: 10px; height: 10px; }

.tabs { display: flex; flex: none; height: 23px; background: #fff; border-top: 1px solid #a0a0a0; color: #808080; align-items: flex-start; }
.tab { height: 19px; line-height: 19px; display: flex; align-items: center; gap: 4px; }
.tab.active { color: #000; background: #f0f0f0; border-right: 1px solid #a0a0a0; border-bottom: 1px solid #a0a0a0; margin-top: -1px; height: 21px; }
.side { margin-top: 4px; padding-left: 12px; }
.side .tab { padding: 0 4px; }
.side .tab.active { padding: 0 6px 0 10px; margin-right: 6px; }
.side .tab:not(.active) { border-right: 1px solid #a0a0a0; }
.side .tab:nth-child(2) { padding-right: 7px; }
.bottom { padding-left: 33px; }
.bottom .tab { padding: 0 33px 0 11px; }
.bottom .tab.active { padding: 0 5px 0 3px; }
.bottom .tab:last-child { padding: 0 0 0 23px; width: 117px; border-right: 1px solid #a0a0a0; }

.ptools { height: 22px; flex: none; display: flex; align-items: center; border-bottom: 1px solid #a0a0a0; gap: 3px; }
.ptools button { height: 20px; min-width: 20px; display: grid; place-items: center; }
.ptools .on { background: #b8d8f2; border: 1px solid #9ccaf0; }
.ptools .expand { font: 10px "DejaVu Sans Mono", monospace; margin-left: -4px; }
.ptools .info { margin-left: auto; }
.plist { flex: 1; overflow: hidden; background: #fff; }
.grid { width: 100%; border-collapse: collapse; table-layout: fixed; background: #fff; }
.c-gut { width: 16px; }
.c-name { width: 230px; }
.grid td, .grid th { height: 19px; line-height: 18px; border-bottom: 1px solid #f0f0f0; padding: 0 2px; text-align: left; white-space: nowrap; }
.grid td:first-child { background: #f0f0f0; padding-left: 6px; }
.grid td + td + td { border-left: 1px solid #e4e4e4; padding-left: 1px; }
.grid .num { color: #1a0a40; }
.grid .cat td, .grid .cat th { height: 18px; line-height: 17px; }
.grid .cat th { color: #fff; background: linear-gradient(90deg, #0078d7, #5ca6e0 50%, #f0f0f0); }
.grid .off th { color: #999; background: #f0f0f0; }
.tri { display: block; width: 8px; height: 8px; }
.scheme { display: flex; align-items: center; gap: 10px; }
.swatches { display: flex; border: 1px solid #999; border-left: 0; }
.swatches i { width: 8px; height: 8px; border-left: 1px solid #999; }
.s1 { background: #add8e0; } .s2 { background: #a4c0cc; } .s3 { background: #a8a8cc; } .s4 { background: #9c7c9c; } .s5 { background: #8c5c7c; }
.s6 { background: #ffe8b8; } .s7 { background: #f0c060; } .s8 { background: #f8a810; } .s9 { background: #a4b464; } .s10 { background: #64d0cc; }
.pdesc { height: 67px; flex: none; border-top: 1px solid #a0a0a0; padding-left: 1px; font-weight: bold; }

.editor { flex: 1; }
.canvas { flex: 1; min-height: 0; display: grid; grid-template: 24px 1fr / 32px 1fr; background: #efefef; }
.hruler { grid-column: 1 / 3; width: 100%; height: 24px; }
.hticks { width: calc(100% - 37px); }
.vruler { width: 32px; height: 100%; overflow: visible; }
.hruler .b, .vruler .b { font-weight: bold; }
.work { padding-top: 8px; overflow: hidden; min-height: 0; }

.page { position: relative; width: 518px; height: 733px; background: #fff; border: 1px solid #000; box-shadow: 5px 6px 1px #777; font: 10px/12px "Liberation Sans", Arial, sans-serif; }
.obj { position: absolute; white-space: nowrap; }
.o-body1 { left: 49px; top: 75px; width: 448px; height: 195px; background: #f1f1f1; }
.o-body2 { left: 49px; top: 270px; width: 444px; height: 384px; background: #f1f1f1; }
.hatch { left: 0; top: 0; width: 516px; height: 731px; }
.o-addr, .o-sender, .o-logo, .o-meta, .o-title, .o-f1, .o-f2, .o-f3 { background: rgba(0, 0, 0, .05); }
.o-addr { left: 48px; top: 138px; width: 216px; height: 75px; padding-top: 1px; }
.o-sender { left: 48px; top: 120px; width: 208px; height: 13px; font-size: 7px; line-height: 8px; color: #222; }
.o-logo { left: 256px; top: 39px; width: 212px; height: 139px; padding: 13px 1px 13px 0; }
.o-logo div { height: 113px; padding: 32px 16px 0 0; background: #bbb; text-align: center; font: bold 17px/20px "Liberation Mono", monospace; }
.o-meta { left: 262px; top: 190px; width: 206px; height: 30px; padding-top: 1px; display: grid; grid-template-columns: 108px 1fr; align-content: start; }
.o-title { left: 48px; top: 247px; width: 293px; height: 17px; font-size: 12px; line-height: 17px; }
.o-f1, .o-f2, .o-f3 { top: 665px; height: 50px; padding-top: 1px; font-size: 7px; line-height: 8px; color: #222; }
.o-f1 { left: 48px; width: 92px; }
.o-f2 { left: 147px; width: 92px; }
.o-f3 { left: 248px; width: 134px; }
.items { left: 49px; top: 270px; width: 438px; border-collapse: collapse; table-layout: fixed; border: 1px solid #000; border-left: 0; }
.c-pos { width: 24px; }
.c-amt { width: 71px; }
.items thead th { height: 15px; background: #d4d4d4; border: 1px solid #000; border-bottom: 2px solid #000; }
.items thead th:first-child { border-left: 0; }
.items tbody td { height: 42px; vertical-align: top; padding: 1px 2px; white-space: normal; }
.items tbody p { margin-top: 1px; }
.items tfoot th { height: 15px; border-top: 2px solid #000; padding: 0 2px; }
.items .ctr { text-align: center; }
.items .r { text-align: right; }
.o-text { left: 51px; top: 357px; display: grid; gap: 12px; line-height: 11px; }
.o-text .amt { margin-left: 14px; }
.o-text dl { display: grid; grid-template-columns: 42px 1fr; padding-left: 14px; }
.guide { left: 48px; top: 0; width: 1px; height: 731px; background: repeating-linear-gradient(#7a7aff 0 3px, transparent 3px 6px); }

.fields { width: 286px; flex: none; background: #fff; }
.fields .phead { background: #f0f0f0; }
.search { height: 23px; flex: none; }
.ftree { display: flex; justify-content: space-between; align-items: flex-start; padding: 1px 0 0 6px; }
.ftree li { display: flex; align-items: center; height: 18px; gap: 6px; }
.ftree .twist { width: 10px; height: 10px; flex: none; }
.ftree .joint { height: 18px; }
.lbl { display: flex; align-items: center; gap: 5px; padding-right: 4px; }
.lbl.on { background: #d9d9d9; }
.filter { padding: 2px; }

.status { height: 19px; flex: none; display: flex; align-items: center; margin-top: 1px; border-top: 1px solid #fff; }
.st { border-right: 1px solid #fff; height: 18px; line-height: 17px; }
.pos { width: 113px; padding-left: 20px; }
.tool { width: 137px; padding-left: 3px; }
.sel { flex: 1; padding-left: 3px; }
.sizer { width: 9px; height: 9px; margin: 6px 4px 0 31px; }
```
